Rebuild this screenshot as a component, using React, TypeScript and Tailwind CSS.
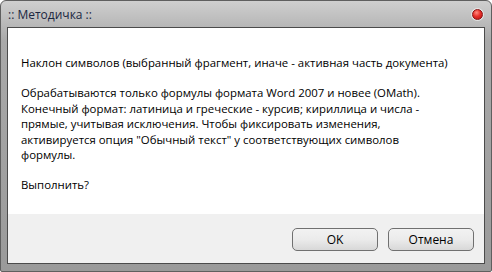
export default function App() {
  return (
    <div className="w-[492px] h-[272px] bg-white">
      <div
        className="w-[492px] h-[272px] flex flex-col border border-[#5f5f5f] rounded-t-[6px] rounded-b-[2px] bg-gradient-to-b from-[#cfcfcf] via-[#a9a9a9] via-[40px] to-[#9a9a9a] px-[6px] pb-[7px]"
        style={{ fontFamily: '"Open Sans", "Noto Sans", sans-serif' }}
      >
        <div className="h-[26px] flex items-center justify-between">
          <span className="pl-[1px] pt-[1px] text-[12px] text-[#1b2741]">:: Методичка ::</span>
          <div className="mr-[1px] mt-[1px] w-[13px] h-[13px] rounded-full bg-[#f3f3f3]/70 flex items-center justify-center">
            <div className="w-[11px] h-[11px] rounded-full border border-[#8a1010] bg-[radial-gradient(circle_at_40%_30%,#ff8a80_0%,#e8302a_45%,#b01010_100%)]" />
          </div>
        </div>
        <div className="flex-1 flex flex-col border border-[#4b4b4b]">
          <div className="h-[186px] bg-white pl-[13px] pt-[27px] text-[11.4px] leading-[15.4px] text-black">
            <p>Наклон символов (выбранный фрагмент, иначе - активная часть документа)</p>
            <p className="mt-[15px]">
              Обрабатываются только формулы формата Word 2007 и новее (OMath).
              <br />
              Конечный формат: латиница и греческие - курсив; кириллица и числа -
              <br />
              прямые, учитывая исключения. Чтобы фиксировать изменения,
              <br />
              активируется опция "Обычный текст" у соответствующих символов
              <br />
              формулы.
            </p>
            <p className="mt-[15px]">Выполнить?</p>
          </div>
          <div className="flex-1 bg-[#f0f0f0] flex items-start justify-end gap-[10px] pr-[10px] pt-[14px]">
            <button className="w-[86px] h-[23px] rounded-[5px] border border-[#707070] bg-gradient-to-b from-[#f2f2f2] via-[#ebebeb] to-[#d8d8d8] text-[12px] text-black">
              OK
            </button>
            <button className="w-[86px] h-[23px] rounded-[5px] border border-[#707070] bg-gradient-to-b from-[#f2f2f2] via-[#ebebeb] to-[#d8d8d8] text-[12px] text-black">
              Отмена
            </button>
          </div>
        </div>
      </div>
    </div>
  );
}
